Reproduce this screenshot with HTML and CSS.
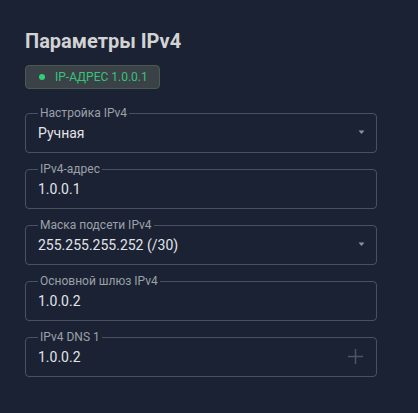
FILE: index.html
```html
<!DOCTYPE html>
<html lang="ru">
<head>
<meta charset="utf-8">
<title>Параметры IPv4</title>
<link rel="stylesheet" href="styles.css">
</head>
<body>
<main class="panel">
  <h1 class="title">Параметры IPv4</h1>
  <div class="badge"><span class="dot"></span><span class="badge-text">IP-АДРЕС 1.0.0.1</span></div>
  <div class="fields">
    <fieldset class="field">
      <legend class="label">Настройка IPv4</legend>
      <div class="row"><span class="value">Ручная</span>
        <svg class="caret" width="7" height="5" viewBox="0 0 7 5"><polygon points="0.5,0.5 6.5,0.5 3.5,4" fill="currentColor"/></svg>
      </div>
    </fieldset>
    <fieldset class="field">
      <legend class="label">IPv4-адрес</legend>
      <div class="row"><span class="value">1.0.0.1</span></div>
    </fieldset>
    <fieldset class="field">
      <legend class="label">Маска подсети IPv4</legend>
      <div class="row"><span class="value">255.255.255.252 (/30)</span>
        <svg class="caret" width="7" height="5" viewBox="0 0 7 5"><polygon points="0.5,0.5 6.5,0.5 3.5,4" fill="currentColor"/></svg>
      </div>
    </fieldset>
    <fieldset class="field">
      <legend class="label">Основной шлюз IPv4</legend>
      <div class="row"><span class="value">1.0.0.2</span></div>
    </fieldset>
    <fieldset class="field">
      <legend class="label">IPv4 DNS 1</legend>
      <div class="row"><span class="value">1.0.0.2</span>
        <svg class="plus" width="15" height="15" viewBox="0 0 15 15"><path d="M7.5 0V15M0 7.5H15" stroke="currentColor" stroke-width="1.5" fill="none"/></svg>
      </div>
    </fieldset>
  </div>
</main>
</body>
</html>
```
FILE: styles.css
```css
html, body {
  margin: 0;
  padding: 0;
  background: #1b2233;
  height: 100%;
}
body {
  font-family: Roboto, "Liberation Sans", Arial, sans-serif;
  color: #e2e4e8;
}
.panel {
  padding: 29px 41px 0 25px;
  width: 352px;
}
.title {
  margin: 0;
  font-size: 20px;
  line-height: 24px;
  font-weight: 700;
  color: #d2d3d5;
}
.badge {
  margin-top: 12px;
  display: inline-flex;
  align-items: center;
  box-sizing: border-box;
  height: 24px;
  padding: 0 11px 0 13px;
  background: #3a4147;
  border: 1px solid #4a5a52;
  border-radius: 4px;
  gap: 10px;
}
.dot {
  width: 6px;
  height: 6px;
  border-radius: 50%;
  background: #2fcf7a;
}
.badge-text {
  font-size: 12px;
  line-height: 14px;
  color: #34c47a;
}
.fields {
  margin-top: 17px;
  display: flex;
  flex-direction: column;
  gap: 9px;
}
.field {
  margin: 0;
  padding: 0 11px 0 12px;
  border: 1px solid #4a5160;
  border-radius: 4px;
  min-width: 0;
}
.label {
  padding: 0 2px;
  font-size: 12px;
  line-height: 14px;
  color: #9ca1a9;
}
.row {
  display: flex;
  align-items: center;
  justify-content: space-between;
  height: 25px;
  padding-bottom: 7px;
}
.value {
  font-size: 14px;
  line-height: 20px;
  color: #e2e4e8;
}
.caret {
  color: #8e939b;
  display: block;
}
.plus {
  color: #4d5565;
  display: block;
  margin-right: 2px;
}
```
